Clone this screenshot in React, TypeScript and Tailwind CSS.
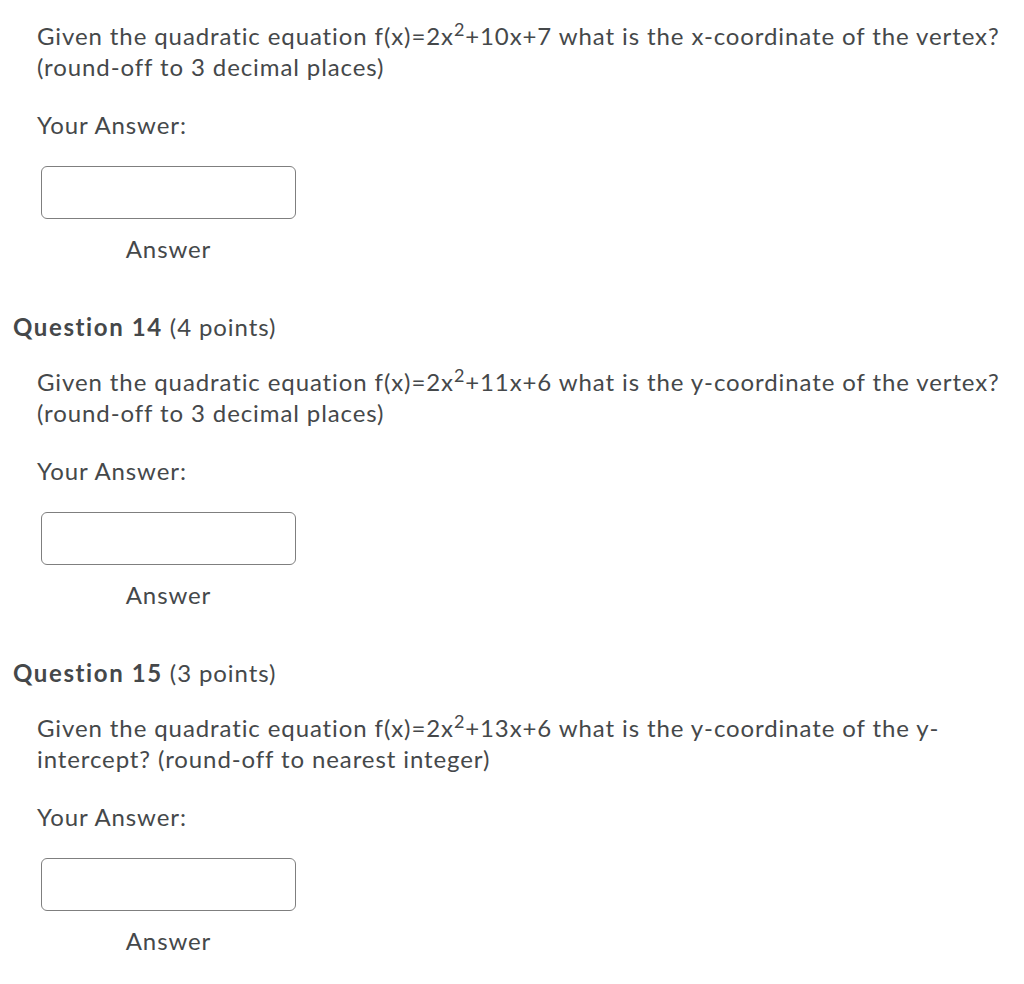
const questions = [
  {
    number: 13,
    points: null as string | null,
    pre: 'Given the quadratic equation f(x)=2x',
    post: '+10x+7 what is the x-coordinate of the vertex? (round-off to 3 decimal places)',
  },
  {
    number: 14,
    points: '4 points',
    pre: 'Given the quadratic equation f(x)=2x',
    post: '+11x+6 what is the y-coordinate of the vertex? (round-off to 3 decimal places)',
  },
  {
    number: 15,
    points: '3 points',
    pre: 'Given the quadratic equation f(x)=2x',
    post: '+13x+6 what is the y-coordinate of the y-intercept? (round-off to nearest integer)',
  },
];

function QuestionBody({ pre, post }: { pre: string; post: string }) {
  return (
    <div className="pl-[37px] pr-[16px]">
      <p className="text-[24px] leading-[31px] tracking-[0.9px]">
        {pre}
        <sup>2</sup>
        {post}
      </p>
      <p className="mt-[27px] text-[24px] leading-[31px] tracking-[0.9px]">Your Answer:</p>
      <div className="mt-[26px] flex w-[263px] flex-col items-center">
        <input
          type="text"
          aria-label="Answer"
          className="ml-[4px] h-[53px] w-[255px] self-start rounded-[6px] border border-[#7f7f7f] bg-white outline-none"
        />
        <span className="mt-[14px] text-[24px] leading-[31px] tracking-[0.9px]">Answer</span>
      </div>
    </div>
  );
}

export default function App() {
  return (
    <main
      className="min-h-screen bg-white pt-[20px] text-[#45484a]"
      style={{ fontFamily: 'Lato, "Open Sans", sans-serif' }}
    >
      {questions.map((q, i) => (
        <section key={q.number} className={i === 0 ? '' : 'mt-[47px]'}>
          {q.points && (
            <h2 className="mb-[24px] pl-[13px] text-[24px] leading-[31px] tracking-[0.9px]">
              <span className="font-bold tracking-[1.6px]">Question {q.number}</span> ({q.points})
            </h2>
          )}
          <QuestionBody pre={q.pre} post={q.post} />
        </section>
      ))}
    </main>
  );
}
